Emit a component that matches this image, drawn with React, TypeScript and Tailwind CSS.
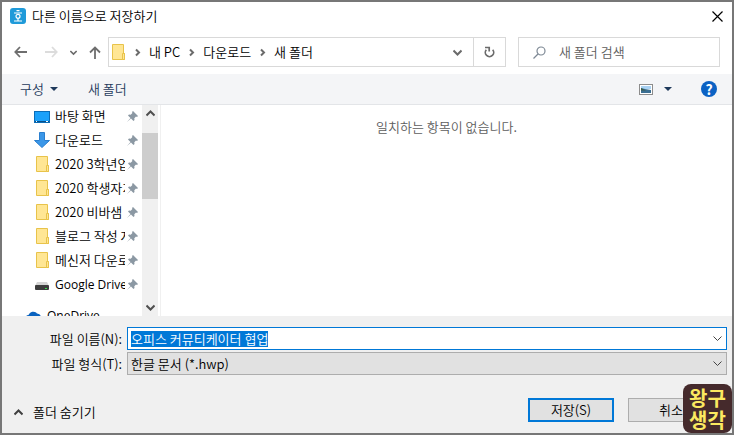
import React, { useEffect, useRef } from "react";

type IconKind = "desktop" | "download" | "folder" | "drive";

const places: { label: string; icon: IconKind }[] = [
  { label: "바탕 화면", icon: "desktop" },
  { label: "다운로드", icon: "download" },
  { label: "2020 3학년업무", icon: "folder" },
  { label: "2020 학생자치", icon: "folder" },
  { label: "2020 비바샘", icon: "folder" },
  { label: "블로그 작성 자료", icon: "folder" },
  { label: "메신저 다운로드", icon: "folder" },
];

const crumbs = ["내 PC", "다운로드", "새 폴더"];

const FolderIcon = () => (
  <svg width="16" height="16" viewBox="0 0 16 16">
    <path d="M2.5.5h11v9h1v6h-12z" fill="#ffe694" stroke="#e8c34a" />
    <path d="M12.5 15.5v-6h2v6z" fill="#ffe694" stroke="#e8c34a" />
  </svg>
);

const PlaceIcon = ({ kind }: { kind: IconKind }) => {
  if (kind === "folder") return <FolderIcon />;
  if (kind === "desktop") {
    return (
      <svg width="16" height="16" viewBox="0 0 16 16">
        <rect x=".5" y="3.5" width="15" height="11" fill="#1ba1fa" stroke="#0b6db8" />
        <path d="M1 13.5h14" stroke="#0a4f87" />
        <path d="M2 13.5h1M12 13.5h2" stroke="#fff" />
      </svg>
    );
  }
  if (kind === "download") {
    return (
      <svg width="16" height="16" viewBox="0 0 16 16">
        <path d="M5.5.5h5v8h5L8 15.5.5 8.5h5z" fill="#3b97e8" stroke="#2a7fcf" />
      </svg>
    );
  }
  return (
    <svg width="16" height="16" viewBox="0 0 16 16">
      <path d="M3 6h10l2 4H1z" fill="#d4d4d4" />
      <rect x="1" y="9" width="14" height="5" rx="1" fill="#3c3c3c" />
      <path d="M11 12.5h2" stroke="#35e04b" />
    </svg>
  );
};

const PinIcon = () => (
  <svg width="11" height="11" viewBox="0 0 11 11" fill="#8b98a3">
    <path d="M6 0l5 5-1 1-1-.4L7.3 7.3 7.5 9 6.5 10 4 7.5 0 11 3.5 7 1 4.5 2 3.5l1.7.2L5.4 2 5 1z" />
  </svg>
);

const Place = ({ icon, children }: { icon: IconKind; children: React.ReactNode }) => (
  <li className="flex h-6 items-center pr-1 pl-8">
    <PlaceIcon kind={icon} />
    <span className="ml-[5px] w-[70px] overflow-hidden whitespace-nowrap">{children}</span>
    <span className="ml-auto">
      <PinIcon />
    </span>
  </li>
);

const Chevron = ({ d, size = 9, stroke = "#6b6b6b", width = 2 }: { d: string; size?: number; stroke?: string; width?: number }) => (
  <svg width={size} height={size} viewBox="0 0 9 9" fill="none" stroke={stroke} strokeWidth={width}>
    <path d={d} />
  </svg>
);

const DOWN = "M.5 2.5l4 4 4-4";
const UP = "M.5 6.5l4-4 4 4";
const RIGHT = "M3 1.5l3 3-3 3";

const App: React.FC = () => {
  const nameRef = useRef<HTMLInputElement>(null);

  useEffect(() => {
    nameRef.current?.focus();
    nameRef.current?.select();
  }, []);

  return (
    <div className="relative flex h-screen flex-col overflow-hidden border-2 border-[#777777] bg-white font-['Noto_Sans_CJK_KR',sans-serif] text-[13px] leading-4 font-[350] text-black">
      {/* Title bar */}
      <header className="flex h-7 shrink-0 items-center pr-[9px] pl-2">
        <svg width="16" height="16" viewBox="0 0 16 16" className="mr-1.5">
          <rect width="16" height="16" rx="3" fill="#1f9ad9" />
          <g fill="none" stroke="#fff" strokeWidth="1.2">
            <path d="M6.5 2.6h3M4 5h8M4 13h8M8 10.5V13" />
            <circle cx="8" cy="8.3" r="2" />
          </g>
        </svg>
        <h1 className="font-[350]">다른 이름으로 저장하기</h1>
        <button aria-label="닫기" className="ml-auto">
          <svg width="11" height="11" viewBox="0 0 11 11" stroke="#000" strokeWidth="1.2">
            <path d="M.5.5l10 10M10.5.5l-10 10" />
          </svg>
        </button>
      </header>

      {/* Navigation */}
      <nav className="flex h-11 shrink-0 items-center px-3">
        <button aria-label="뒤로">
          <svg width="14" height="12" viewBox="0 0 14 12" fill="none" stroke="#6e6e6e" strokeWidth="1.8">
            <path d="M13 6H1.5M6 1L1.3 6 6 11" />
          </svg>
        </button>
        <button aria-label="앞으로" className="ml-4">
          <svg width="14" height="12" viewBox="0 0 14 12" fill="none" stroke="#dcdcdc" strokeWidth="1.8">
            <path d="M1 6h11.5M8 1l4.7 5L8 11" />
          </svg>
        </button>
        <button aria-label="최근 위치" className="ml-3">
          <Chevron d={DOWN} size={7} />
        </button>
        <button aria-label="위로" className="ml-3">
          <svg width="12" height="13" viewBox="0 0 12 13" fill="none" stroke="#6e6e6e" strokeWidth="1.8">
            <path d="M6 13V1.5M1 6.5l5-5 5 5" />
          </svg>
        </button>
        <div className="ml-[7px] flex h-[30px] flex-1 items-center border border-[#d9d9d9] pl-px">
          <FolderIcon />
          {crumbs.map((crumb) => (
            <React.Fragment key={crumb}>
              <span className="mx-[7px]">
                <Chevron d={RIGHT} />
              </span>
              <button>{crumb}</button>
            </React.Fragment>
          ))}
          <button aria-label="이전 위치" className="mr-[11px] ml-auto">
            <Chevron d={DOWN} />
          </button>
          <button aria-label="새로 고침" className="flex h-full w-8 items-center justify-center border-l border-[#d9d9d9]">
            <svg width="11" height="12" viewBox="0 0 11 12" fill="none" stroke="#6b6b6b" strokeWidth="1.7">
              <path d="M8.7 3.7A4.2 4.2 0 1 1 2.3 3.7" />
              <path d="M1 1.5h4.2v4" />
            </svg>
          </button>
        </div>
        <label className="ml-3 flex h-[30px] w-[202px] items-center border border-[#d9d9d9] pl-3.5">
          <svg width="13" height="13" viewBox="0 0 13 13" fill="none" stroke="#7d8894" strokeWidth="1.2" className="shrink-0">
            <circle cx="8" cy="5" r="4" />
            <path d="M5 8L.5 12.5" />
          </svg>
          <input aria-label="새 폴더 검색" placeholder="새 폴더 검색" className="ml-[13px] w-full min-w-0 outline-none placeholder:text-[#5d5d5d]" />
        </label>
      </nav>

      {/* Toolbar */}
      <div className="flex h-[31px] shrink-0 items-center border-b border-[#e3e5e8] bg-[#f4f5f7] pr-[15px] pl-[18px] text-[#1e395b]">
        <button className="flex items-center gap-1.5">
          구성
          <svg width="8" height="4" viewBox="0 0 8 4" fill="currentColor">
            <path d="M0 0h8L4 4z" />
          </svg>
        </button>
        <button className="ml-[30px]">새 폴더</button>
        <button aria-label="보기" className="ml-auto flex items-center gap-[11px]">
          <svg width="14" height="11" viewBox="0 0 14 11">
            <rect x=".5" y=".5" width="13" height="10" fill="#fff" stroke="#8c8c8c" />
            <rect x="2" y="2" width="10" height="3" fill="#a9d2f3" />
            <path d="M2 4l4 1 6 1v3H2z" fill="#3b6f93" />
            <path d="M2 4l5 2.5H2z" fill="#3c5c46" />
          </svg>
          <svg width="8" height="4" viewBox="0 0 8 4" fill="currentColor">
            <path d="M0 0h8L4 4z" />
          </svg>
        </button>
        <button aria-label="도움말" className="ml-[29px] flex size-4 items-center justify-center rounded-full bg-[#0b62c4] text-sm font-bold text-white">
          ?
        </button>
      </div>

      {/* Folder tree and file list */}
      <div className="flex min-h-0 flex-1">
        <aside className="flex w-[159px] shrink-0 border-r border-[#f0f0f0] pr-0.5">
          <ul className="-mt-px min-w-0 flex-1 overflow-hidden">
            {places.map((place) => (
              <Place key={place.label} icon={place.icon}>
                {place.label}
              </Place>
            ))}
            <Place icon="drive">
              <span className="font-['Open_Sans',sans-serif] text-xs font-normal">Google Drive</span>
            </Place>
            <li className="mt-2 flex h-6 items-center gap-[5px] pl-6">
              <svg width="16" height="12" viewBox="0 0 16 12" fill="#0a63c0">
                <path d="M3 11a3 3 0 0 1-.5-6A5 5 0 0 1 11 3.5 4 4 0 0 1 13 11z" />
              </svg>
              <span className="font-['Open_Sans',sans-serif] text-xs font-normal">OneDrive</span>
            </li>
          </ul>
          <div className="flex w-4 flex-col items-center bg-[#f0f0f0] py-1">
            <Chevron d={UP} stroke="#505050" />
            <div className="mt-[15px] h-[66px] w-full bg-[#cdcdcd]" />
            <span className="mt-auto">
              <Chevron d={DOWN} stroke="#505050" />
            </span>
          </div>
        </aside>
        <main className="flex-1 pt-3.5 text-center text-[#5d5d5d]">일치하는 항목이 없습니다.</main>
      </div>

      {/* File name, type and actions */}
      <form className="shrink-0 bg-[#f0f0f0] pt-[11px] pr-[5px] pb-[11px]" onSubmit={(e) => e.preventDefault()}>
        <div className="grid grid-cols-[120px_1fr] items-center gap-x-[5px] gap-y-0.5">
          <label htmlFor="file-name" className="text-right">파일 이름(N):</label>
          <div className="flex h-[23px] items-center border border-[#0078d7] bg-white pr-1 pl-[3px]">
            <input
              id="file-name"
              ref={nameRef}
              defaultValue="오피스 커뮤티케이터 협업"
              className="h-4 min-w-0 flex-1 outline-none selection:bg-[#0078d7] selection:text-white"
            />
            <button type="button" aria-label="파일 이름 목록">
              <Chevron d={DOWN} stroke="#444" width={1} />
            </button>
          </div>
          <label htmlFor="file-type" className="text-right">파일 형식(T):</label>
          <div className="relative">
            <select id="file-type" className="block h-[23px] w-full appearance-none border border-[#adadad] bg-[#e1e1e1] pl-[3px]">
              <option>한글 문서 (*.hwp)</option>
            </select>
            <span className="pointer-events-none absolute inset-y-0 right-[5px] flex items-center">
              <Chevron d={DOWN} stroke="#444" width={1} />
            </span>
          </div>
        </div>
        <div className="mt-[23px] flex items-center pr-[13px] pl-3">
          <button type="button" className="mt-1 flex items-center gap-2.5">
            <Chevron d={UP} stroke="#404040" />
            폴더 숨기기
          </button>
          <button type="submit" className="ml-auto h-6 w-[86px] border-2 border-[#0078d7] bg-[#e1e1e1]">저장(S)</button>
          <button type="button" className="ml-3.5 h-6 w-[86px] border border-[#adadad] bg-[#e1e1e1]">취소</button>
        </div>
      </form>

      {/* Blog badge */}
      <div className="absolute right-0 bottom-0 flex size-[49px] flex-col items-center justify-center rounded-lg bg-[#452a2c] text-xl leading-[22px] font-bold text-[#fbe960]">
        <span>왕구</span>
        <span>생각</span>
      </div>
    </div>
  );
};

export default App;
